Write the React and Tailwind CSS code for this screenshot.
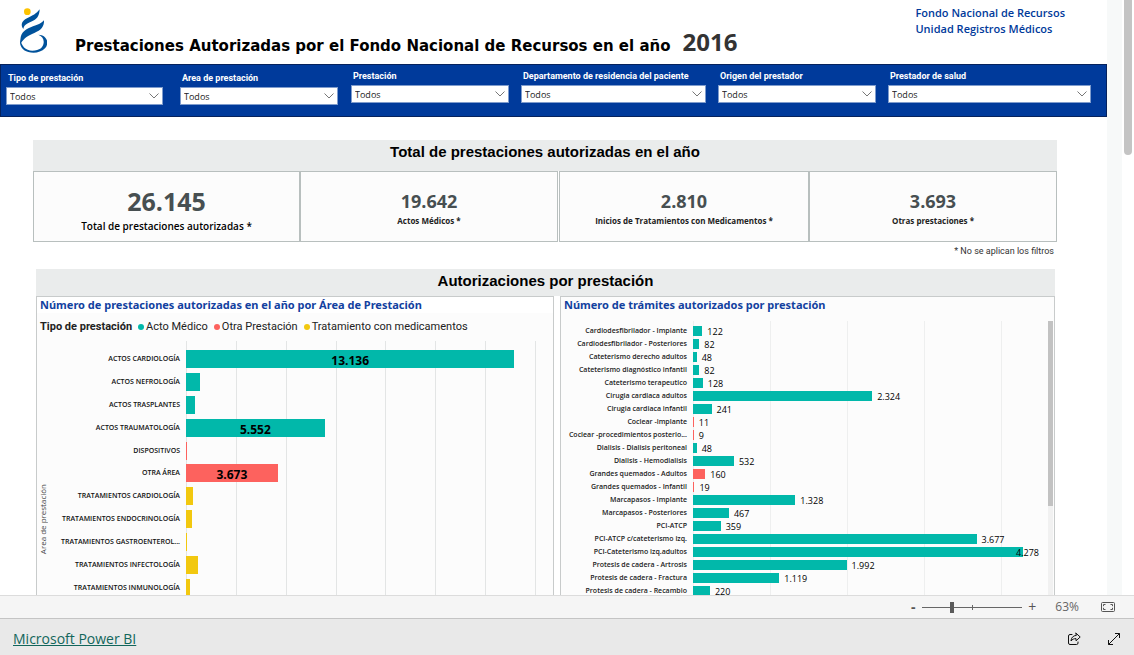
import React, { useState } from "react";

const filterGroups = [
  {
    className: "grid grid-cols-[157fr_158fr] gap-x-[17px] pt-[7px] flex-[332]",
    items: [
      { id: "tipo", label: "Tipo de prestación" },
      { id: "area", label: "Area de prestación" },
    ],
  },
  {
    className:
      "grid grid-cols-[158fr_185fr_158fr_203fr] gap-x-3 pt-[5px] flex-[740]",
    items: [
      { id: "prestacion", label: "Prestación" },
      { id: "departamento", label: "Departamento de residencia del paciente" },
      { id: "origen", label: "Origen del prestador" },
      { id: "prestador", label: "Prestador de salud" },
    ],
  },
];

const areas = [
  { name: "ACTOS CARDIOLOGÍA", value: 13136, label: "13.136", color: "bg-[#01b8aa]" },
  { name: "ACTOS NEFROLOGÍA", value: 580, color: "bg-[#01b8aa]" },
  { name: "ACTOS TRASPLANTES", value: 370, color: "bg-[#01b8aa]" },
  { name: "ACTOS TRAUMATOLOGÍA", value: 5552, label: "5.552", color: "bg-[#01b8aa]" },
  { name: "DISPOSITIVOS", value: 20, color: "bg-[#fd625e]" },
  { name: "OTRA ÁREA", value: 3673, label: "3.673", color: "bg-[#fd625e]" },
  { name: "TRATAMIENTOS CARDIOLOGÍA", value: 290, color: "bg-[#f2c80f]" },
  { name: "TRATAMIENTOS ENDOCRINOLOGÍA", value: 250, color: "bg-[#f2c80f]" },
  { name: "TRATAMIENTOS GASTROENTEROL...", value: 30, color: "bg-[#f2c80f]" },
  { name: "TRATAMIENTOS INFECTOLOGÍA", value: 490, color: "bg-[#f2c80f]" },
  { name: "TRATAMIENTOS INMUNOLOGÍA", value: 160, color: "bg-[#f2c80f]" },
];
const AREA_MAX = 14000;

const tramites = [
  { name: "Cardiodesfibrilador - Implante", value: 122 },
  { name: "Cardiodesfibrilador - Posteriores", value: 82 },
  { name: "Cateterismo derecho adultos", value: 48 },
  { name: "Cateterismo diagnóstico infantil", value: 82 },
  { name: "Cateterismo terapeutico", value: 128 },
  { name: "Cirugia cardiaca adultos", value: 2324 },
  { name: "Cirugia cardiaca infantil", value: 241 },
  { name: "Coclear -implante", value: 11, otra: true },
  { name: "Coclear -procedimientos posterio...", value: 9, otra: true },
  { name: "Dialisis - Dialisis peritoneal", value: 48 },
  { name: "Dialisis - Hemodialisis", value: 532 },
  { name: "Grandes quemados - Adultos", value: 160, otra: true },
  { name: "Grandes quemados - Infantil", value: 19, otra: true },
  { name: "Marcapasos - Implante", value: 1328 },
  { name: "Marcapasos - Posteriores", value: 467 },
  { name: "PCI-ATCP", value: 359 },
  { name: "PCI-ATCP c/cateterismo izq.", value: 3677 },
  { name: "PCI-Cateterismo izq.adultos", value: 4278 },
  { name: "Protesis de cadera - Artrosis", value: 1992 },
  { name: "Protesis de cadera - Fractura", value: 1119 },
  { name: "Protesis de cadera - Recambio", value: 220 },
];
const TRAMITE_MAX = 4500;

const formatNumber = (n) => n.toString().replace(/\B(?=(\d{3})+$)/g, ".");

function Logo() {
  return (
    <svg viewBox="0 0 84 140" className="w-7 h-12 shrink-0" aria-label="FNR">
      <circle cx="25" cy="15" r="10" fill="#fdc300" />
      <path d="M62 8C61 29 54 38 36 45C22 51 15 55 13 67C4 55 8 43 24 35C41 26 52 22 62 8Z" fill="#00529b" />
      <path d="M75 41C76 60 66 71 46 79C27 87 16 94 6 109C1 89 9 75 28 65C48 56 63 54 75 41Z" fill="#00529b" />
      <path d="M4 96C6 117 20 132 40 132C62 132 73 121 74 108C75 96 69 88 58 84C84 85 92 109 78 125C66 138 44 141 28 136C7 130 0 113 4 96Z" fill="#00529b" />
    </svg>
  );
}

function Header() {
  return (
    <header className="flex h-16 pl-[19px] pr-[42px] pt-[6px]">
      <Logo />
      <div className="flex items-baseline gap-3 pl-7 pt-6">
        <h1 className="font-['DejaVu_Sans',sans-serif] font-bold text-[15px] leading-6 text-black whitespace-nowrap">
          Prestaciones Autorizadas por el Fondo Nacional de Recursos en el año
        </h1>
        <span className="font-bold text-[24px] leading-6 text-[#333]">2016</span>
      </div>
      <p className="ml-auto -mt-px text-[11px] leading-4 font-semibold text-[#003a9b] whitespace-nowrap">
        Fondo Nacional de Recursos
        <br />
        Unidad Registros Médicos
      </p>
    </header>
  );
}

function Filter({ id, label }) {
  return (
    <div className="flex flex-col min-w-0">
      <label
        htmlFor={id}
        className="pl-[2px] pb-[2px] text-[9px] leading-[13px] font-['Roboto',sans-serif] font-bold text-white whitespace-nowrap"
      >
        {label}
      </label>
      <div className="grid items-center">
        <select
          id={id}
          className="col-start-1 row-start-1 h-[18px] w-full appearance-none bg-white border border-[#7f9ccd] pl-[3px] pr-5 pt-px text-[9px] leading-4 text-[#222]"
        >
          <option>Todos</option>
        </select>
        <svg
          viewBox="0 0 10 6"
          className="col-start-1 row-start-1 justify-self-end mr-1 w-[10px] h-[6px] pointer-events-none"
          fill="none"
          stroke="#777"
        >
          <path d="M0.5 0.5L5 5L9.5 0.5" />
        </svg>
      </div>
    </div>
  );
}

function Card({ value, label, big }) {
  return (
    <div className="flex flex-col items-center pt-[17px] pb-[7px] border border-[#b8bfbe] bg-[#fcfcfc]">
      <span
        className={
          big
            ? "text-[25px] leading-6 font-bold text-[#474f51]"
            : "text-[18px] leading-6 font-bold text-[#474f51]"
        }
      >
        {value}
      </span>
      <span
        className={
          big
            ? "pt-[5px] text-[10px] leading-4 font-semibold text-black"
            : "text-[8px] leading-4 font-bold text-[#222]"
        }
      >
        {label}
      </span>
    </div>
  );
}

function Totals() {
  return (
    <section className="pt-[23px] pl-[33px] pr-[50px]">
      <h2 className="h-[31px] bg-[#eaecec] text-center font-['Liberation_Sans',sans-serif] font-bold text-[15px] leading-6 text-black">
        Total de prestaciones autorizadas en el año
      </h2>
      <div className="flex gap-px">
        <div className="grid grid-cols-[267fr_258fr] flex-[525]">
          <Card big value="26.145" label="Total de prestaciones autorizadas *" />
          <Card value="19.642" label="Actos Médicos *" />
        </div>
        <div className="grid grid-cols-[250fr_248fr] flex-[498]">
          <Card value="2.810" label="Inicios de Tratamientos con Medicamentos *" />
          <Card value="3.693" label="Otras prestaciones *" />
        </div>
      </div>
      <p className="pr-[3px] pt-px text-right text-[9px] leading-4 font-['Roboto',sans-serif] text-[#333]">
        * No se aplican los filtros
      </p>
    </section>
  );
}

function LegendItem({ color, children }) {
  return (
    <span className="flex items-center gap-[2px]">
      <span className={color + " size-[6px] rounded-full"} />
      {children}
    </span>
  );
}

function AreaChart() {
  return (
    <div className="flex-[518] min-w-0 border border-b-0 border-[#c8cbcb] bg-[#fcfcfc]">
      <h3 className="bg-white pl-[3px] text-[11px] leading-4 font-['Noto_Sans',sans-serif] font-bold text-[#12419f] whitespace-nowrap">
        Número de prestaciones autorizadas en el año por Área de Prestación
      </h3>
      <div className="flex items-center gap-[6px] pl-[3px] pt-[6px] text-[11px] leading-4 font-['Roboto',sans-serif] text-[#222] whitespace-nowrap">
        <span className="font-bold">Tipo de prestación</span>
        <LegendItem color="bg-[#01b8aa]">Acto Médico</LegendItem>
        <LegendItem color="bg-[#fd625e]">Otra Prestación</LegendItem>
        <LegendItem color="bg-[#f2c80f]">Tratamiento con medicamentos</LegendItem>
      </div>
      <div className="flex pr-[17px] pt-[6px]">
        <div className="w-3 flex items-center justify-center pt-[98px]">
          <span className="[writing-mode:vertical-rl] rotate-180 text-[8px] leading-3 text-[#444] whitespace-nowrap">
            Area de prestación
          </span>
        </div>
        <div className="relative flex-1 h-[258px] pt-[7px]">
          <div className="absolute inset-y-0 left-[137px] right-0 flex justify-between">
            {[0, 2, 4, 6, 8, 10, 12, 14].map((n) => (
              <span key={n} className="w-px bg-[#e3e5e5]" />
            ))}
          </div>
          <div className="relative grid grid-rows-11 h-[251px]">
            {areas.map((a) => (
              <div key={a.name} className="flex items-center">
                <span className="w-[137px] pr-[6px] shrink-0 text-right text-[7px] leading-3 font-semibold text-[#111] whitespace-nowrap">
                  {a.name}
                </span>
                <div className="flex-1">
                  <div
                    className={a.color + " h-[18px] pt-[2px] text-center text-[12px] leading-[18px] font-bold text-black"}
                    style={{ width: (a.value / AREA_MAX) * 100 + "%" }}
                  >
                    {a.label}
                  </div>
                </div>
              </div>
            ))}
          </div>
        </div>
      </div>
    </div>
  );
}

function TramitesChart() {
  return (
    <div className="flex-[495] min-w-0 border border-b-0 border-[#c8cbcb] bg-[#fcfcfc]">
      <h3 className="pl-[3px] text-[11px] leading-4 font-['Noto_Sans',sans-serif] font-bold text-[#12419f] whitespace-nowrap">
        Número de trámites autorizados por prestación
      </h3>
      <div className="flex pt-2">
        <div className="relative flex-1 h-[280px] pt-[3px]">
          <div className="absolute inset-y-0 left-[132px] right-2">
            {[0, 1000, 2000, 3000, 4000].map((n) => (
              <span
                key={n}
                className="absolute inset-y-0 w-px bg-[#eeefef]"
                style={{ left: (n / TRAMITE_MAX) * 100 + "%" }}
              />
            ))}
          </div>
          <div className="relative grid grid-rows-21 h-[274px] pr-2">
            {tramites.map((t) => {
              const pct = (t.value / TRAMITE_MAX) * 100;
              return (
                <div key={t.name} className="flex items-center">
                  <span className="w-[132px] pr-[6px] shrink-0 text-right text-[7px] leading-3 font-semibold text-[#222] whitespace-nowrap">
                    {t.name}
                  </span>
                  <div className="relative flex-1">
                    <div
                      className={t.otra ? "h-[10px] bg-[#fd625e]" : "h-[10px] bg-[#01b8aa]"}
                      style={{ width: pct + "%" }}
                    />
                    <span
                      className="absolute top-0 text-[9px] leading-3 font-medium text-black"
                      style={{ left: `min(${pct}% + 5px, 100% - 24px)` }}
                    >
                      {formatNumber(t.value)}
                    </span>
                  </div>
                </div>
              );
            })}
          </div>
        </div>
        <div className="w-[5px] mr-px bg-[#f1f1f1]">
          <div className="h-[185px] bg-[#c2c2c2]" />
        </div>
      </div>
    </div>
  );
}

function StatusBar() {
  const [zoom, setZoom] = useState(29);
  return (
    <div className="flex items-center justify-end h-[23px] pr-[19px] border-t border-[#dcdcdc] bg-[#f5f5f5] text-[#555]">
      <button className="w-4 text-center text-[14px] leading-5 font-bold" aria-label="Alejar">
        -
      </button>
      <div className="relative flex items-center w-[100px] h-4 mx-px">
        <span className="absolute left-1/2 h-[5px] w-px bg-[#666]" />
        <input
          type="range"
          aria-label="Zoom"
          value={zoom}
          onChange={(e) => setZoom(e.target.value)}
          className="relative w-full h-4 appearance-none bg-transparent [&::-webkit-slider-runnable-track]:h-px [&::-webkit-slider-runnable-track]:bg-[#666] [&::-webkit-slider-thumb]:appearance-none [&::-webkit-slider-thumb]:w-1 [&::-webkit-slider-thumb]:h-[11px] [&::-webkit-slider-thumb]:-mt-[5px] [&::-webkit-slider-thumb]:bg-[#5a5a5a]"
        />
      </div>
      <button className="w-[18px] text-center text-[14px] leading-5" aria-label="Acercar">
        +
      </button>
      <span className="pl-[14px] text-[12px] leading-5 text-[#666]">63%</span>
      <button className="ml-[22px]" aria-label="Ajustar a la página">
        <svg viewBox="0 0 14 10" className="w-[14px] h-[10px]" fill="none" stroke="#555">
          <rect x="0.5" y="0.5" width="13" height="9" rx="1" />
          <path d="M4.5 2.5H2.5V4.2M9.5 2.5H11.5V4.2M4.5 7.5H2.5V5.8M9.5 7.5H11.5V5.8" />
        </svg>
      </button>
    </div>
  );
}

function Footer() {
  return (
    <footer className="flex items-center h-[37px] pl-[13px] pr-[13px] pt-[3px] border-t border-[#c4c4c4] bg-[#e9e9e9]">
      <a href="#" className="text-[14px] leading-5 underline text-[#12665b]">
        Microsoft Power BI
      </a>
      <button className="ml-auto" aria-label="Compartir">
        <svg viewBox="0 0 14 14" className="w-[14px] h-[14px]" fill="none" stroke="#111" strokeLinejoin="round" strokeLinecap="round">
          <path d="M5 2.5H3Q1.5 2.5 1.5 4V11Q1.5 12.5 3 12.5H9.5Q11 12.5 11 11V10" />
          <path d="M9 1.2L13.2 5L9 8.8V6.6C7 6.6 5.3 7.2 4 9C4.2 5.8 6 3.6 9 3.4Z" />
        </svg>
      </button>
      <button className="ml-[26px]" aria-label="Pantalla completa">
        <svg viewBox="0 0 14 14" className="w-[14px] h-[14px]" fill="none" stroke="#111">
          <path d="M1.5 12.5L12.5 1.5M8 1.5H12.5V6M1.5 8V12.5H6" />
        </svg>
      </button>
    </footer>
  );
}

export default function App() {
  return (
    <div className="flex flex-col h-screen bg-white font-['Open_Sans',sans-serif]">
      <div className="flex flex-1 min-h-0">
        <main className="flex-1 min-w-0 overflow-hidden">
          <Header />
          <div className="flex gap-[13px] h-[53px] pl-[5px] pr-[15px] border border-[#06225c] bg-[#003a9b]">
            {filterGroups.map((group, i) => (
              <div key={i} className={group.className}>
                {group.items.map((f) => (
                  <Filter key={f.id} {...f} />
                ))}
              </div>
            ))}
          </div>
          <Totals />
          <section className="pt-[10px] pl-9 pr-[52px]">
            <h2 className="h-[27px] bg-[#eaecec] text-center font-['Liberation_Sans',sans-serif] font-bold text-[15px] leading-6 text-black">
              Autorizaciones por prestación
            </h2>
            <div className="flex gap-[6px]">
              <AreaChart />
              <TramitesChart />
            </div>
          </section>
        </main>
        <div className="w-[15px] bg-[#f7f9f9]" />
        <div className="w-3 px-[2px]">
          <div className="h-[155px] rounded-b-full bg-[#c4c4c4]" />
        </div>
      </div>
      <StatusBar />
      <Footer />
    </div>
  );
}
